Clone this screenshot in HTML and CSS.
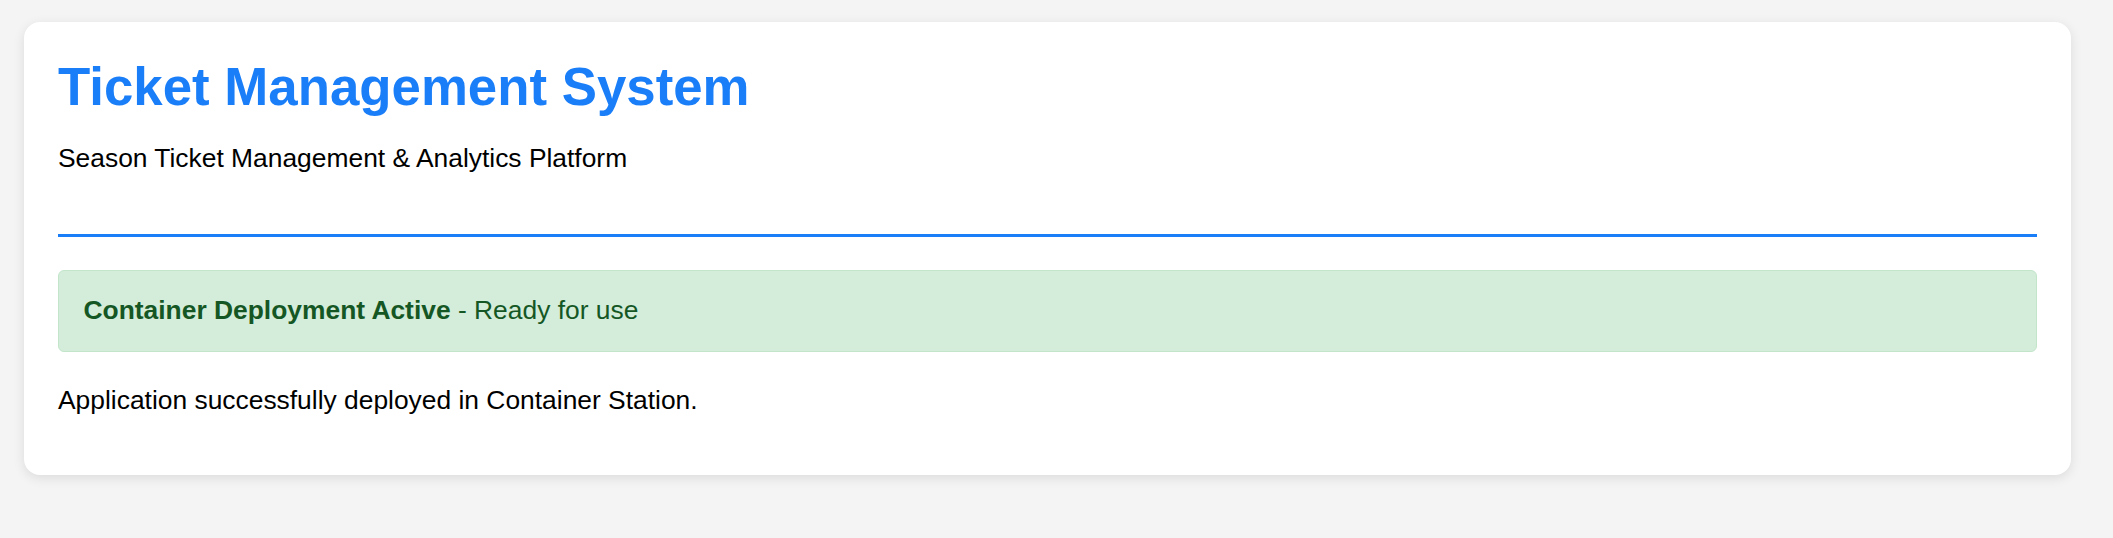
FILE: index.html
```html
<!DOCTYPE html>
<html lang="en">
<head>
<meta charset="utf-8">
<title>Ticket Management System</title>
<link rel="stylesheet" href="styles.css">
</head>
<body>
<div class="page">
  <main class="card">
    <header class="card-header">
      <h1 class="title">Ticket Management System</h1>
      <p class="subtitle">Season Ticket Management &amp; Analytics Platform</p>
    </header>
    <div class="alert"><strong>Container Deployment Active</strong> - Ready for use</div>
    <p class="note">Application successfully deployed in Container Station.</p>
  </main>
</div>
</body>
</html>
```

FILE: styles.css
```css
html, body {
  margin: 0;
  padding: 0;
}

body {
  background: #f4f4f4;
  font-family: "Liberation Sans", Arial, sans-serif;
  font-size: 26.4px;
  color: #000;
}

.page {
  padding: 22px 42px 22px 24px;
}

.card {
  display: block;
  background: #fff;
  border-radius: 16px;
  padding: 34px 34px 33px 34px;
  box-shadow: 0 3px 12px rgba(0, 0, 0, 0.1);
}

.card-header {
  padding-bottom: 60px;
  border-bottom: 3px solid #1a7ef8;
  margin-bottom: 33px;
}

.title {
  margin: 0 0 25.5px 0;
  font-size: 52.8px;
  font-weight: bold;
  color: #1a7ef8;
  line-height: normal;
}

.subtitle {
  margin: 0;
  font-size: 26.4px;
}

.alert {
  background: #d4edda;
  border: 1px solid #c3e6cb;
  color: #155724;
  border-radius: 6px;
  padding: 24.5px 24.5px;
  margin-bottom: 33px;
  font-size: 26.4px;
}

.note {
  margin: 0 0 26px 0;
  font-size: 26.4px;
}
```
